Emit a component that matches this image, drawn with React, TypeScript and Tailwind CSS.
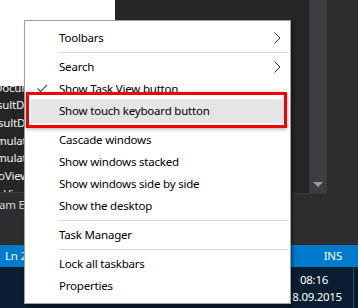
import React from "react";

const Chevron = () => (
  <svg
    className="absolute left-[249px] top-[5px]"
    width="7"
    height="12"
    viewBox="0 0 7 12"
  >
    <polyline
      points="0.5,0.5 6,6 0.5,11.5"
      fill="none"
      stroke="#2b2b2b"
      strokeWidth="1"
    />
  </svg>
);

const Check = () => (
  <svg
    className="absolute left-[12px] top-[6px]"
    width="11"
    height="9"
    viewBox="0 0 11 9"
  >
    <polyline
      points="0.5,4.5 3.5,7.5 10,1"
      fill="none"
      stroke="#4a5466"
      strokeWidth="1.1"
    />
  </svg>
);

type Entry =
  | { kind: "item"; label: string; arrow?: boolean; check?: boolean; hot?: boolean }
  | { kind: "sep" };

const entries: Entry[] = [
  { kind: "item", label: "Toolbars", arrow: true },
  { kind: "sep" },
  { kind: "item", label: "Search", arrow: true },
  { kind: "item", label: "Show Task View button", check: true },
  { kind: "item", label: "Show touch keyboard button", hot: true },
  { kind: "sep" },
  { kind: "item", label: "Cascade windows" },
  { kind: "item", label: "Show windows stacked" },
  { kind: "item", label: "Show windows side by side" },
  { kind: "item", label: "Show the desktop" },
  { kind: "sep" },
  { kind: "item", label: "Task Manager" },
  { kind: "sep" },
  { kind: "item", label: "Lock all taskbars" },
  { kind: "item", label: "Properties" },
];

const codeRows: { text: string; ml: string }[] = [
  { text: "Documents", ml: "ml-[-6px]" },
  { text: "sultDetails", ml: "ml-[-3px]" },
  { text: "sultDetails", ml: "ml-[-2px]" },
  { text: "mulatorView", ml: "ml-[-4px]" },
  { text: "mulatorView", ml: "ml-[-4px]" },
  { text: "oViewModel", ml: "ml-[-2px]" },
  { text: "ileViews", ml: "ml-[-8px]" },
];

export default function App() {
  return (
    <div className="relative w-[358px] h-[308px] overflow-hidden font-['Noto_Sans',sans-serif]">
      {/* background desktop */}
      <div className="flex flex-col w-[358px] h-[308px]">
        <div className="flex h-[245px]">
          <div className="w-[115px] flex flex-col">
            <div className="h-[86px] bg-white" />
            <div className="h-[106px] bg-[#252526] overflow-hidden">
              <div className="mt-[-7.5px] text-[11.5px] tracking-[-0.2px] leading-[17.7px] text-[#f1f1f1]">
                {codeRows.map((r, i) => (
                  <div key={i} className={`whitespace-nowrap ${r.ml}`}>
                    {r.text}
                  </div>
                ))}
              </div>
            </div>
            <div className="h-px bg-[#3f3f46]" />
            <div className="flex-1 bg-[#2d2d30]">
              <div className="h-[24px] flex items-center text-[11.5px] tracking-[-0.2px] text-[#d8d8d8] whitespace-nowrap ml-[-1px]">
                am Explorer
              </div>
            </div>
          </div>
          <div className="w-[176px] bg-[#252526]" />
          <div className="w-[18px] flex flex-col">
            <div className="h-[193px] bg-[#252526]" />
            <div className="flex-1 bg-[#2d2d30] border-t border-[#3a3a3d]" />
          </div>
          <div className="w-[18px] flex flex-col">
            <div className="h-[193px] bg-[#3e3e42] flex flex-col justify-end items-center pb-[6px]">
              <div className="w-0 h-0 border-l-[5px] border-r-[5px] border-t-[5px] border-l-transparent border-r-transparent border-t-[#999999]" />
            </div>
            <div className="flex-1 bg-[#2d2d30] border-t border-[#3a3a3d]" />
          </div>
          <div className="flex-1 bg-[#2d2d30]" />
        </div>
        <div className="h-[22px] bg-[#007acc] flex items-center justify-between text-white text-[11.5px] tracking-[-0.2px] pl-[5px] pr-[16px]">
          <span>Ln 2</span>
          <span>INS</span>
        </div>
        <div className="flex-1 bg-[#0b1d31] flex justify-end">
          <div className="w-[56px] flex flex-col items-center pt-[3.5px] text-[11.5px] tracking-[-0.3px] leading-[17px] text-white whitespace-nowrap">
            <span>08:16</span>
            <span>18.09.2015</span>
          </div>
          <div className="w-[11px]" />
          <div className="w-px bg-[#3b4a5c]" />
          <div className="w-[4px]" />
        </div>
      </div>

      {/* context menu */}
      <div className="absolute left-[24px] top-[20px] w-[267px] h-[284px] bg-white border border-[#a0a0a0] shadow-[2px_2px_3px_rgba(0,0,0,0.4)] pt-[5.5px] text-[11.5px] tracking-[-0.2px] text-black">
        {entries.map((e, i) =>
          e.kind === "sep" ? (
            <div key={i} className="h-[7px] pt-[3.5px] pl-[34px] pr-[1px]">
              <div className="h-px bg-[#d7d7d7]" />
            </div>
          ) : e.hot ? (
            <div key={i} className="h-[22px] px-[6px] mt-[-1px] mb-[1px]">
              <div className="h-[24px] bg-[#e5e5e5] flex items-center pl-[28px] whitespace-nowrap">
                {e.label}
              </div>
            </div>
          ) : (
            <div
              key={i}
              className="relative h-[22px] flex items-center pl-[34px] whitespace-nowrap"
            >
              {e.check && <Check />}
              {e.label}
              {e.arrow && <Chevron />}
            </div>
          )
        )}
      </div>

      {/* red annotation */}
      <div className="absolute left-[26px] top-[92px] w-[261px] h-[36px] border-[3px] border-[#f00000] shadow-[0_1px_4px_rgba(0,0,0,0.35)]" />
    </div>
  );
}
